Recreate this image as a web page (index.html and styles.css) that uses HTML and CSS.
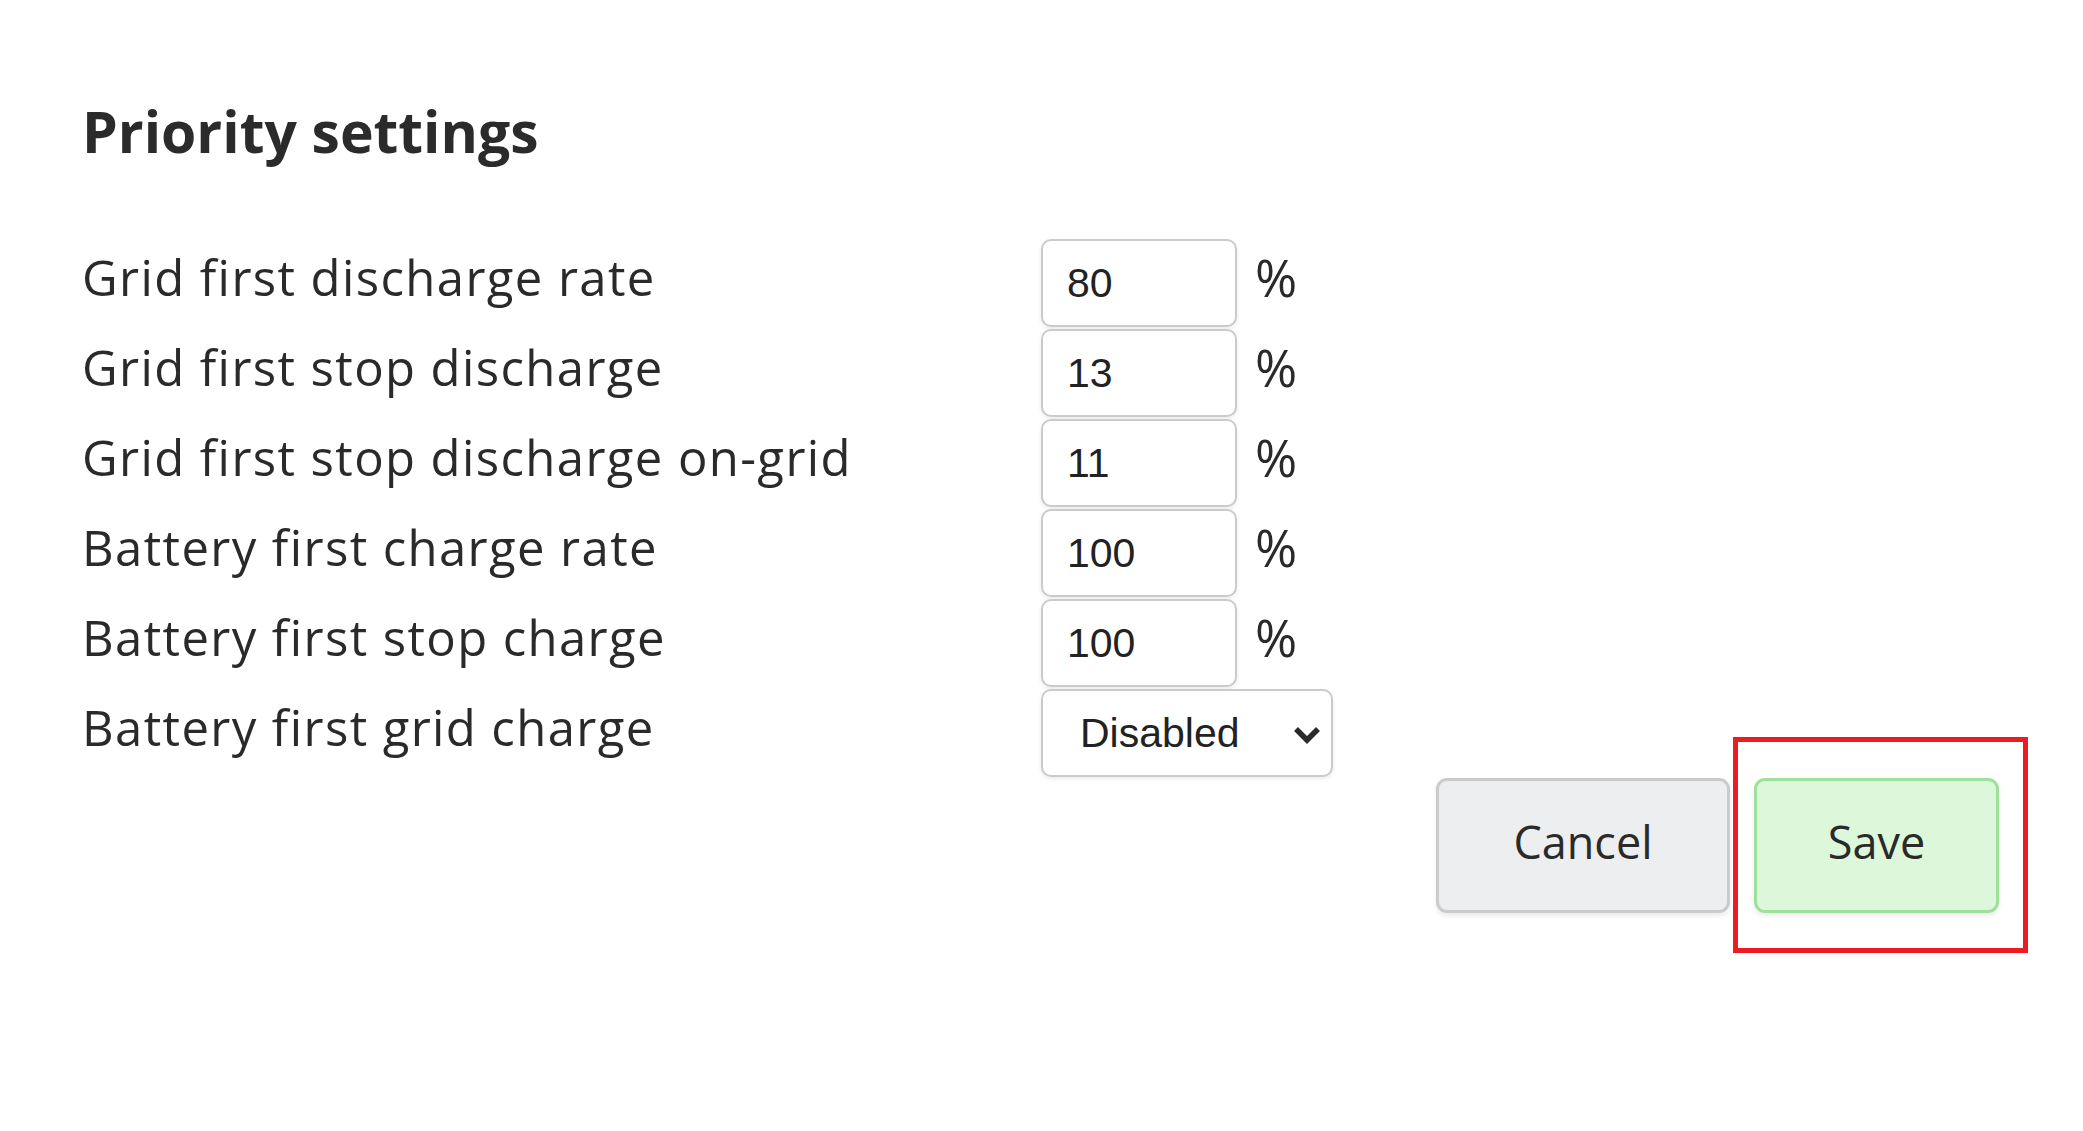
FILE: index.html
```html
<!DOCTYPE html>
<html lang="en">
<head>
<meta charset="utf-8">
<title>Priority settings</title>
<link rel="stylesheet" href="styles.css">
</head>
<body>
<main class="page">
  <h1 class="title">Priority settings</h1>
  <form class="settings">
    <label class="label" for="f1">Grid first discharge rate</label>
    <input class="num" id="f1" type="text" value="80">
    <span class="unit">%</span>

    <label class="label" for="f2">Grid first stop discharge</label>
    <input class="num" id="f2" type="text" value="13">
    <span class="unit">%</span>

    <label class="label" for="f3">Grid first stop discharge on-grid</label>
    <input class="num" id="f3" type="text" value="11">
    <span class="unit">%</span>

    <label class="label" for="f4">Battery first charge rate</label>
    <input class="num" id="f4" type="text" value="100">
    <span class="unit">%</span>

    <label class="label" for="f5">Battery first stop charge</label>
    <input class="num" id="f5" type="text" value="100">
    <span class="unit">%</span>

    <label class="label" for="f6">Battery first grid charge</label>
    <div class="select-wrap">
      <select class="sel" id="f6">
        <option>Disabled</option>
        <option>Enabled</option>
      </select>
      <svg class="chev" width="28" height="18" viewBox="0 0 28 18" aria-hidden="true">
        <path d="M3 3 L14 14 L25 3" fill="none" stroke="#2a2a2a" stroke-width="5.5" stroke-linecap="butt" stroke-linejoin="miter"/>
      </svg>
    </div>
  </form>
  <div class="actions">
    <button class="btn btn-cancel" type="button">Cancel</button>
    <div class="save-wrap">
      <button class="btn btn-save" type="button">Save</button>
      <span class="highlight" aria-hidden="true"></span>
    </div>
  </div>
</main>
</body>
</html>
```

FILE: styles.css
```css
html, body {
  margin: 0;
  padding: 0;
  background: #ffffff;
}

body {
  font-family: "Open Sans", "Liberation Sans", sans-serif;
  color: #2a2a2a;
  min-height: 1131px;
}

.page {
  padding: 97px 0 176px 82px;
}

.title {
  margin: 0;
  font-size: 57px;
  line-height: 68px;
  font-weight: 700;
  letter-spacing: 0;
  color: #2b2b2b;
}

.settings {
  margin-top: 74px;
  display: grid;
  grid-template-columns: 959px 196px auto;
  grid-auto-rows: 88px;
  row-gap: 2px;
  align-items: start;
}

.label {
  grid-column: 1;
  font-size: 49px;
  line-height: 76px;
  letter-spacing: 1.4px;
  color: #2a2a2a;
}

.num {
  grid-column: 2;
  box-sizing: border-box;
  width: 196px;
  height: 88px;
  margin: 0;
  padding: 0 10px 0 24px;
  border: 2.5px solid #cbcbcd;
  border-radius: 10px;
  background: #ffffff;
  box-shadow: 0 2px 4px rgba(0, 0, 0, 0.08);
  font-family: "Liberation Sans", Arial, sans-serif;
  font-size: 41px;
  color: #222222;
  outline: none;
}

.unit {
  grid-column: 3;
  padding-left: 18px;
  font-size: 51px;
  line-height: 76px;
  color: #2a2a2a;
}

.select-wrap {
  grid-column: 2 / span 2;
  position: relative;
  width: 292px;
  height: 88px;
}

.sel {
  appearance: none;
  -webkit-appearance: none;
  box-sizing: border-box;
  width: 292px;
  height: 88px;
  margin: 0;
  padding: 0 50px 0 37px;
  border: 2.5px solid #cbcbcd;
  border-radius: 10px;
  background: #ffffff;
  box-shadow: 0 2px 4px rgba(0, 0, 0, 0.08);
  font-family: "Liberation Sans", Arial, sans-serif;
  font-size: 41px;
  color: #222222;
  outline: none;
}

.chev {
  position: absolute;
  left: 252px;
  top: 37px;
  pointer-events: none;
}

.actions {
  margin-top: 1px;
  display: flex;
  justify-content: flex-end;
  gap: 24px;
  padding-right: 84px;
}

.btn {
  box-sizing: border-box;
  height: 135px;
  margin: 0;
  padding: 0 0 8px 0;
  border-radius: 11px;
  font-family: "Open Sans", "Liberation Sans", sans-serif;
  font-size: 45px;
  color: #2a2a2a;
  box-shadow: 0 3px 5px rgba(0, 0, 0, 0.08);
  cursor: pointer;
}

.btn-cancel {
  width: 294px;
  background: #edeef0;
  border: 3px solid #cbcbcd;
}

.save-wrap {
  position: relative;
}

.btn-save {
  width: 245px;
  background: #dcf7d9;
  border: 3px solid #9fe09b;
}

.highlight {
  position: absolute;
  left: -21px;
  top: -41px;
  width: 295px;
  height: 216px;
  box-sizing: border-box;
  border: 5px solid #ed1c24;
  pointer-events: none;
}
```
